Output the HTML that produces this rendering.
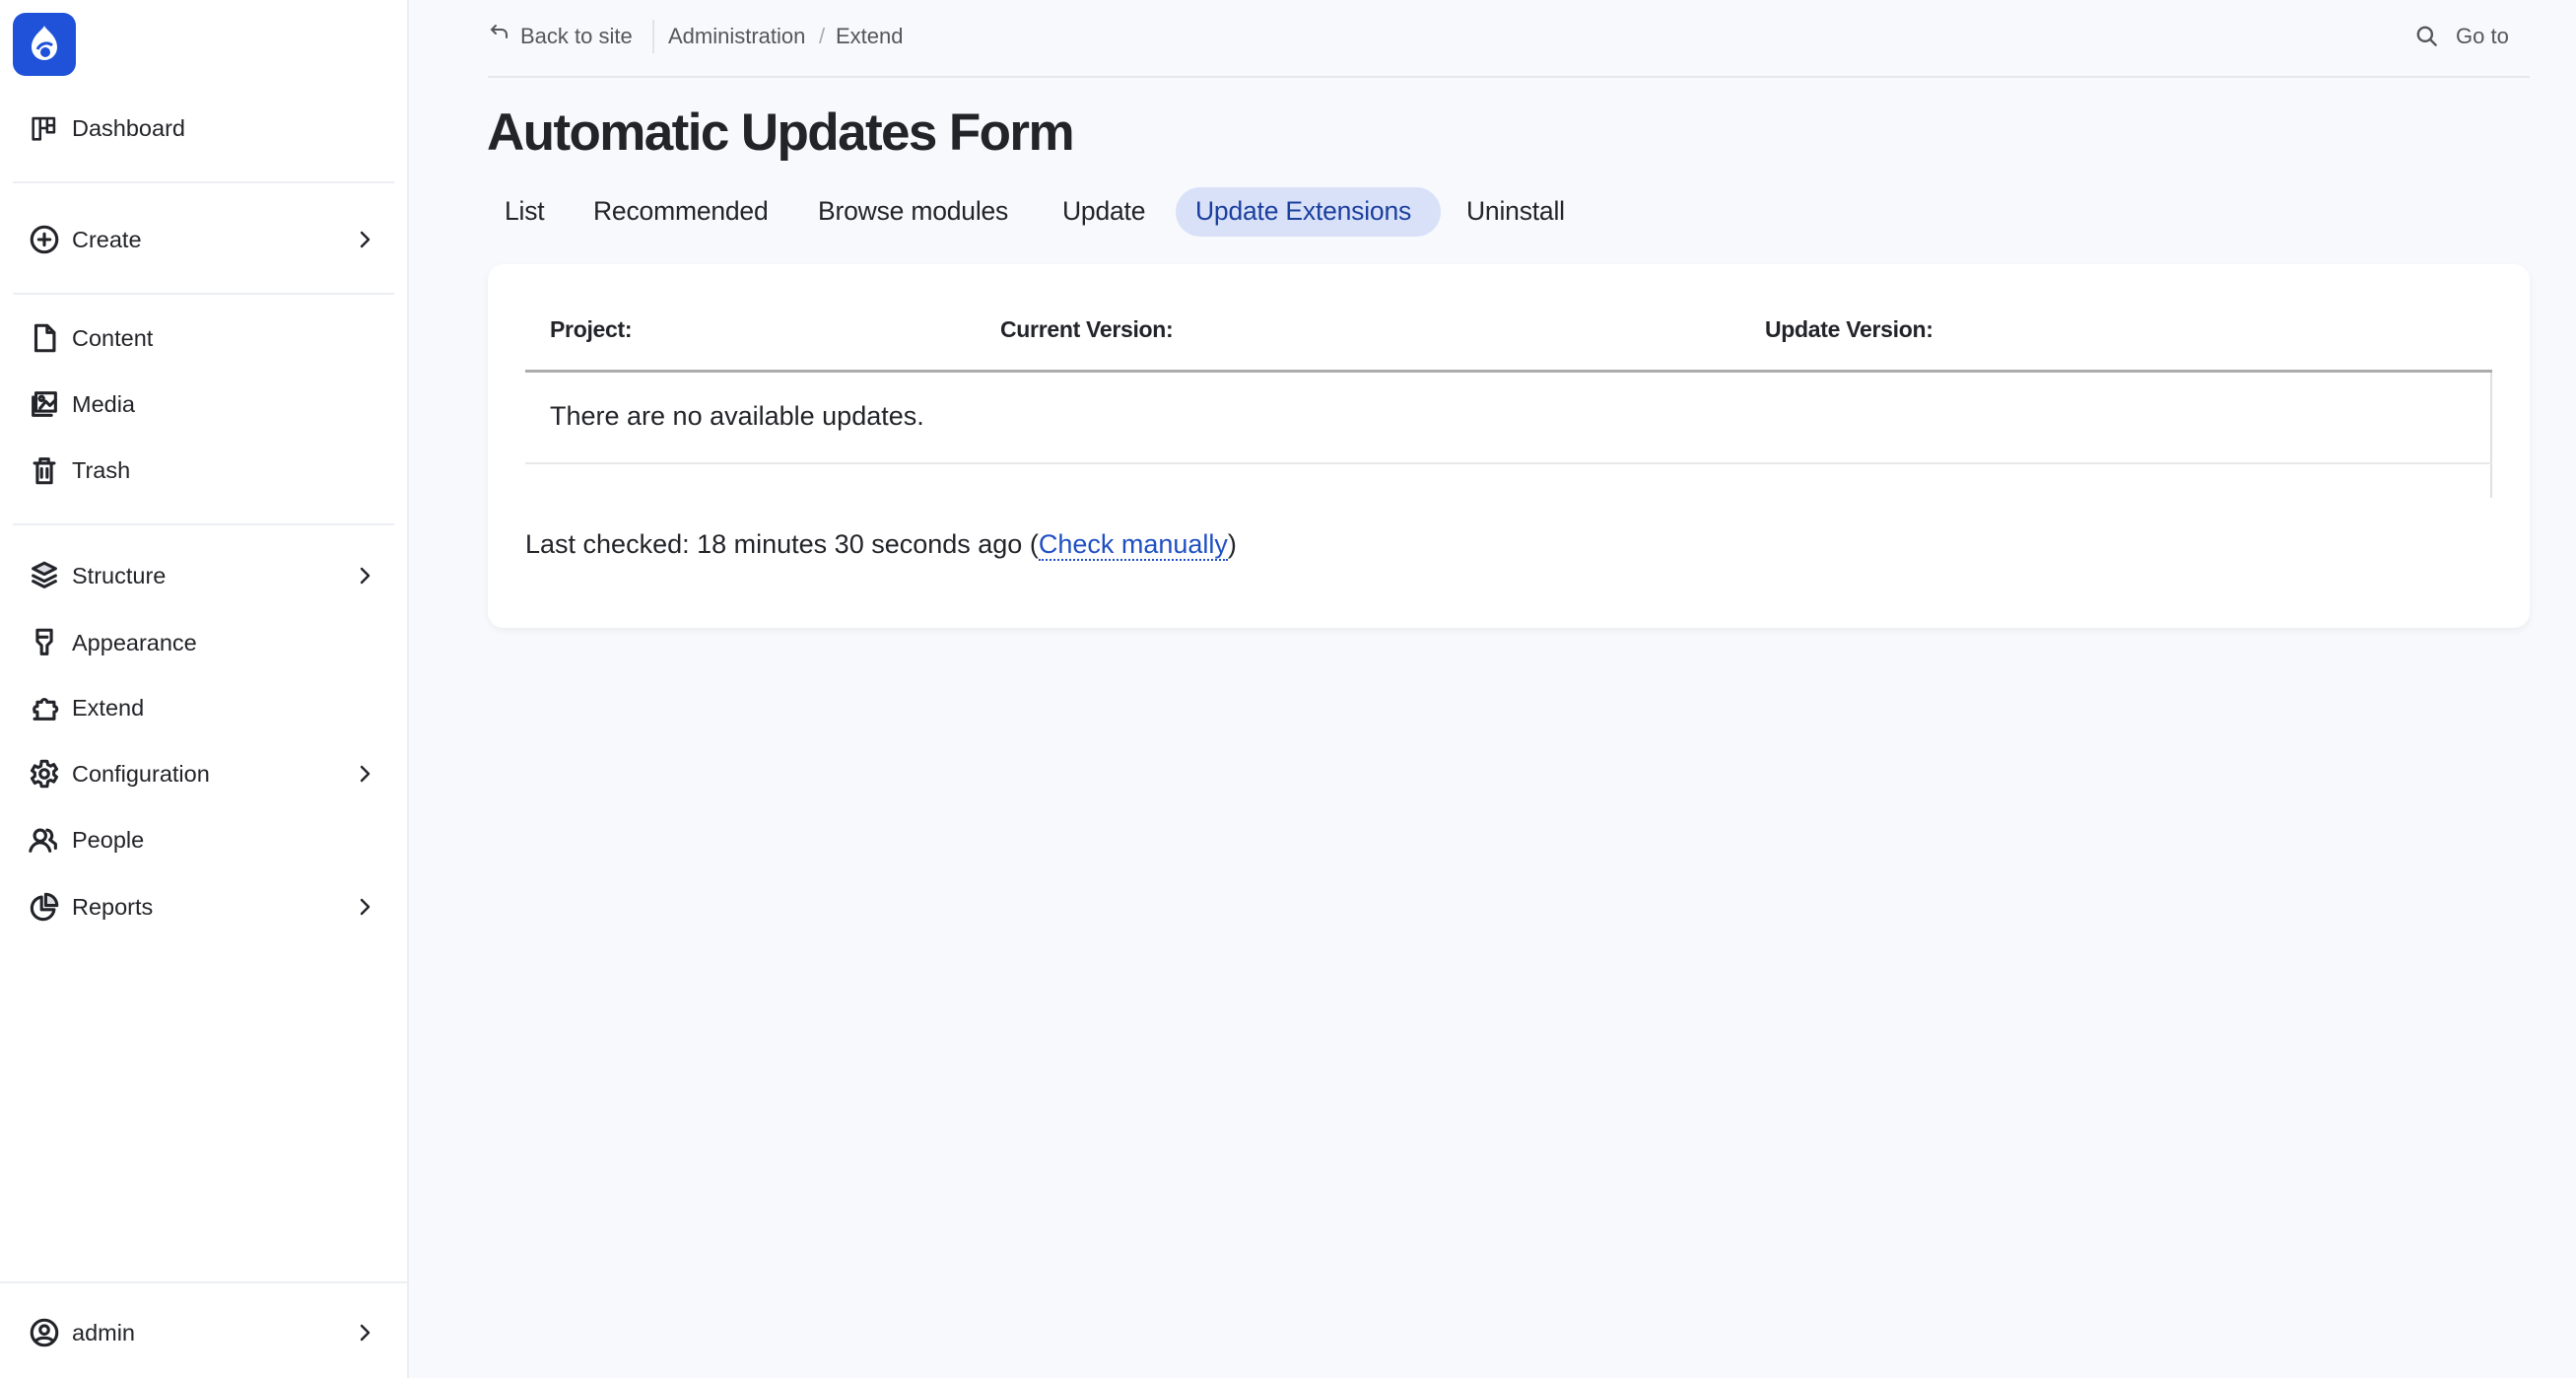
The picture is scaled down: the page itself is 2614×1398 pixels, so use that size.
<!DOCTYPE html>
<html><head><meta charset="utf-8"><style>
*{box-sizing:border-box;margin:0;padding:0}
body{width:2614px;height:1398px;background:#f8f9fd;font-family:"Liberation Sans",Arial,sans-serif;color:#222330;position:relative;overflow:hidden}
.side{position:absolute;left:0;top:0;width:415px;height:1398px;background:#fff;border-right:2px solid #eceef3}
.logo{position:absolute;left:13px;top:13px;width:64px;height:64px;background:#1f52d9;border-radius:13px}
.sep{position:absolute;left:13px;width:387px;height:2px;background:#eceef3}
.nav{position:absolute;left:28px;height:40px;display:flex;align-items:center;font-size:23.5px;color:#232429}
.nav svg{width:34px;height:34px;margin-right:11px;fill:none;stroke:#232429;stroke-width:2.2;stroke-linecap:round;stroke-linejoin:round}
.chev{position:absolute;left:358px;width:24px;height:24px;fill:none;stroke:#232429;stroke-width:2.4;stroke-linecap:round;stroke-linejoin:round}
.top{position:absolute;left:495px;top:0;width:2072px;height:79px;border-bottom:2px solid #e6e8ee;font-size:22px;color:#55565b}
.top span{position:absolute;top:24px}
h1{position:absolute;left:494px;top:104px;font-size:53px;font-weight:bold;letter-spacing:-1.6px;color:#232429}
.tab{position:absolute;top:199px;font-size:26.5px;color:#232429;letter-spacing:-0.2px}
.pill{position:absolute;left:1193px;top:190px;width:269px;height:50px;border-radius:25px;background:#d9e1f8}
.card{position:absolute;left:495px;top:268px;width:2072px;height:369px;background:#fff;border-radius:16px;box-shadow:0 3px 8px rgba(0,0,0,.05)}
.th{position:absolute;top:321px;font-size:23px;font-weight:bold;color:#232429;letter-spacing:-0.3px}
</style></head><body>
<div class="side">
<div class="logo"><svg width="64" height="64" viewBox="0 0 64 64"><path d="M32 13c2 5 13 10 13 22a13 13 0 0 1-26 0c0-12 11-17 13-22z" fill="#fff"/><circle cx="33" cy="40" r="5" fill="#1f52d9"/><path d="M25 37c3-6 10-8 15-4" stroke="#1f52d9" stroke-width="3" fill="none"/></svg></div>
<div class="nav" style="top:110px"><svg viewBox="0 0 24 24" style="stroke-width:1.8"><path d="M4 5h5v15H4zM9 5h5v7H9zM14 5h5v5h-5zM14 10h5v5h-5zM9 12h5"/></svg>Dashboard</div>
<div class="sep" style="top:184px"></div>
<div class="nav" style="top:223px"><svg viewBox="0 0 24 24"><circle cx="12" cy="12" r="9"/><path d="M12 8v8M8 12h8"/></svg>Create</div>
<svg class="chev" style="top:231px" viewBox="0 0 24 24"><path d="M9 5l7 7-7 7"/></svg>
<div class="sep" style="top:297px"></div>
<div class="nav" style="top:323px"><svg viewBox="0 0 24 24"><path d="M6 3h8l5 5v13H6zM14 3v5h5"/></svg>Content</div>
<div class="nav" style="top:390px"><svg viewBox="0 0 24 24"><rect x="6" y="4" width="14" height="13"/><path d="M4 7v13h13M9 15l4-5 3 3 4-4"/><circle cx="10" cy="8" r="1.5"/></svg>Media</div>
<div class="nav" style="top:457px"><svg viewBox="0 0 24 24"><path d="M5 7h14M9 7V4h6v3M7 7v14h10V7M10 11v6M14 11v6"/></svg>Trash</div>
<div class="sep" style="top:531px"></div>
<div class="nav" style="top:564px"><svg viewBox="0 0 24 24"><path d="M12 3l8 4-8 4-8-4z" fill="#dcdde3"/><path d="M4 12l8 4 8-4M4 16l8 4 8-4"/></svg>Structure</div>
<svg class="chev" style="top:572px" viewBox="0 0 24 24"><path d="M9 5l7 7-7 7"/></svg>
<div class="nav" style="top:632px"><svg viewBox="0 0 24 24"><path d="M7 3h10v8l-3 3v6h-4v-6l-3-3zM7 8h7"/></svg>Appearance</div>
<div class="nav" style="top:698px"><svg viewBox="0 0 24 24"><path d="M5 20h14v-5a2 2 0 0 0 0-4V8h-5a2 2 0 0 0-4 0H7v3a2 2 0 0 0-2 3v1h2v5"/></svg>Extend</div>
<div class="nav" style="top:765px"><svg viewBox="0 0 24 24"><circle cx="12" cy="12" r="3"/><path d="M10 3h4l.5 2.5 2 1 2.3-1.2 2 3.4-2 1.6v2.4l2 1.6-2 3.4-2.3-1.2-2 1L14 21h-4l-.5-2.5-2-1-2.3 1.2-2-3.4 2-1.6v-2.4l-2-1.6 2-3.4 2.3 1.2 2-1z"/></svg>Configuration</div>
<svg class="chev" style="top:773px" viewBox="0 0 24 24"><path d="M9 5l7 7-7 7"/></svg>
<div class="nav" style="top:832px"><svg viewBox="0 0 24 24"><circle cx="9" cy="9" r="4"/><path d="M2 20c1-4 4-6 7-6s6 2 7 6M14 5a4 4 0 0 1 2 7l4 3v3"/></svg>People</div>
<div class="nav" style="top:900px"><svg viewBox="0 0 24 24"><path d="M10 5a8 8 0 1 0 9 9h-9z"/><path d="M13 3v8h8a8 8 0 0 0-8-8z" fill="#dcdde3"/></svg>Reports</div>
<svg class="chev" style="top:908px" viewBox="0 0 24 24"><path d="M9 5l7 7-7 7"/></svg>
<div class="sep" style="top:1300px;left:0;width:415px"></div>
<div class="nav" style="top:1332px"><svg viewBox="0 0 24 24"><circle cx="12" cy="12" r="9"/><circle cx="12" cy="10" r="3"/><path d="M6 18c2-3 10-3 12 0"/></svg>admin</div>
<svg class="chev" style="top:1340px" viewBox="0 0 24 24"><path d="M9 5l7 7-7 7"/></svg>
</div>
<div class="top">
<svg style="position:absolute;left:0;top:22px" width="24" height="24" viewBox="0 0 24 24" fill="none" stroke="#55565b" stroke-width="2" stroke-linecap="round"><path d="M8 4L4 8l4 4M4 8h10a5 5 0 0 1 5 5v3"/></svg>
<span style="left:33px">Back to site</span>
<div style="position:absolute;left:167px;top:20px;width:2px;height:34px;background:#e2e3e8"></div>
<span style="left:183px">Administration</span>
<span style="left:336px;color:#aaa">/</span>
<span style="left:353px">Extend</span>
<svg style="position:absolute;left:1955px;top:24px" width="26" height="26" viewBox="0 0 24 24" fill="none" stroke="#55565b" stroke-width="2.2" stroke-linecap="round"><circle cx="10" cy="10" r="6.5"/><path d="M15 15l5 5"/></svg>
<span style="left:1997px">Go to</span>
</div>
<h1>Automatic Updates Form</h1>
<div class="pill"></div>
<div class="tab" style="left:512px">List</div>
<div class="tab" style="left:602px">Recommended</div>
<div class="tab" style="left:830px">Browse modules</div>
<div class="tab" style="left:1078px">Update</div>
<div class="tab" style="left:1213px;color:#1b3f9e">Update Extensions</div>
<div class="tab" style="left:1488px">Uninstall</div>
<div class="card"></div>
<div class="th" style="left:558px">Project:</div>
<div class="th" style="left:1015px">Current Version:</div>
<div class="th" style="left:1791px">Update Version:</div>
<div style="position:absolute;left:533px;top:375px;width:1996px;height:3px;background:#acacac"></div>
<div style="position:absolute;left:2527px;top:378px;width:2px;height:127px;background:#e0e0e0"></div>
<div style="position:absolute;left:558px;top:407px;font-size:27px;color:#232429">There are no available updates.</div>
<div style="position:absolute;left:533px;top:469px;width:1996px;height:2px;background:#e8e8ea"></div>
<div style="position:absolute;left:533px;top:537px;font-size:27px;color:#232429">Last checked: 18 minutes 30 seconds ago (<span style="color:#1f4fc2;border-bottom:2px dotted #1f4fc2">Check manually</span>)</div>
</body></html>
